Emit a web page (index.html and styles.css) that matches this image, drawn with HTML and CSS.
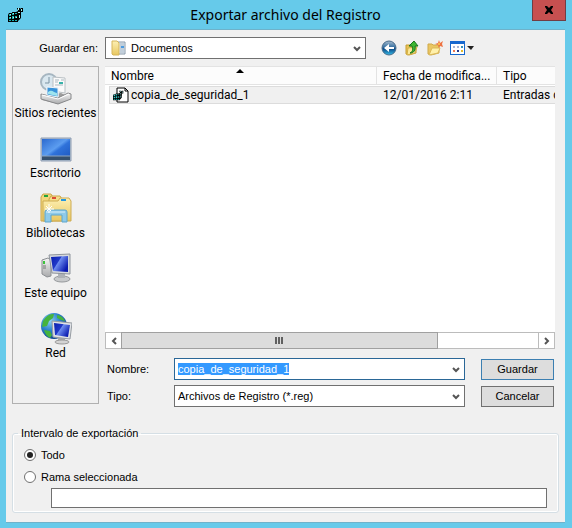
FILE: index.html
```html
<!DOCTYPE html>
<html lang="es">
<head>
<meta charset="utf-8">
<title>Exportar archivo del Registro</title>
<link rel="stylesheet" href="styles.css">
</head>
<body>
<svg class="defs" aria-hidden="true">
  <defs>
    <symbol id="reg" viewBox="0 0 16 16">
      <path d="M0 8 1 6h3V5h4l2-1V3L9 2V1h3v1l1-1h2v4h-2v6l-3 3v1H0z" fill="#000"/>
      <path d="M1 7h2v2H1zM4 6h2v2H4zM7 6h2v1H7zM1 10h2v2H1zM4 9h2v3H4zM1 13h2v1H1zM4 13h2v1H4zM7 13h2v1H7zM7 9h2v2H7z" fill="#19aeb0"/>
      <path d="M2 7h1v1H2zM5 6h1v1H5zM2 10h1v1H2zM5 10h1v1H5zM10 5h2v1h-2zM11 8h1v3h-1zM13 2h1v2h-1zM10 1h1v2h-1zM8 10h1v1H8z" fill="#a5f5f3"/>
    </symbol>
    <symbol id="chev" viewBox="0 0 8 6"><path d="M1 1 4 4 7 1" fill="none" stroke="#555" stroke-width="2"/></symbol>
    <linearGradient id="blue" x1="0" y1="0" x2="1" y2="1"><stop offset="0" stop-color="#2b69cf"/><stop offset=".45" stop-color="#5c9df0"/><stop offset=".55" stop-color="#2f72da"/><stop offset="1" stop-color="#1c55bd"/></linearGradient>
    <linearGradient id="screen" x1="0" y1="0" x2="1" y2=".6"><stop offset="0" stop-color="#0a1fae"/><stop offset=".45" stop-color="#2038c8"/><stop offset=".5" stop-color="#6d8cf0"/><stop offset="1" stop-color="#0c1cb0"/></linearGradient>
    <linearGradient id="folder" x1="0" y1="0" x2="0" y2="1"><stop offset="0" stop-color="#fdf0b4"/><stop offset="1" stop-color="#e8c760"/></linearGradient>
    <linearGradient id="metal" x1="0" y1="0" x2="0" y2="1"><stop offset="0" stop-color="#f4f4f4"/><stop offset="1" stop-color="#a9aaac"/></linearGradient>
    <radialGradient id="globe" cx=".35" cy=".3" r=".75"><stop offset="0" stop-color="#8fd2f5"/><stop offset=".5" stop-color="#2c82cc"/><stop offset="1" stop-color="#0b3f8a"/></radialGradient>
    <linearGradient id="back" x1="0" y1="0" x2="0" y2="1"><stop offset="0" stop-color="#a9bdcf"/><stop offset=".45" stop-color="#326da0"/><stop offset=".55" stop-color="#0c4784"/><stop offset="1" stop-color="#35bdea"/></linearGradient>
  </defs>
</svg>
<div class="window">
  <header class="titlebar">
    <svg class="app-icon"><use href="#reg"/></svg>
    <h1>Exportar archivo del Registro</h1>
    <button class="close" aria-label="Cerrar"><svg viewBox="0 0 10 8"><path d="M1 0h2l2 2 2-2h2v1L7 4l2 3v1H7L5 6 3 8H1V7l2-3-2-3z" fill="#000"/></svg></button>
  </header>
  <main class="client">
    <div class="lookin">
      <label for="folder-select">Guardar en:</label>
      <div class="combo with-icon">
        <svg class="lead" viewBox="0 0 16 16"><path d="M5 2h9v12H5z" fill="#e4edf5" stroke="#8898a8"/><path d="M9 4h4M9 6h4M9 8h4M9 10h4M9 12h4" stroke="#9fb0c0"/><path d="M10 6h3v2h-3z" fill="#4c9be0"/><path d="M1 1h5l2 2v12H2l-1-1z" fill="url(#folder)" stroke="#d6b65c"/></svg>
        <select id="folder-select"><option>Documentos</option></select>
        <svg class="arrow"><use href="#chev"/></svg>
      </div>
      <div class="tools">
        <button aria-label="Atrás"><svg viewBox="0 0 16 16"><circle cx="8" cy="8" r="7" fill="url(#back)" stroke="#496c8b"/><path d="M3 8l5-4v3h5v2H8v3z" fill="#fff"/></svg></button>
        <button aria-label="Subir un nivel"><svg viewBox="0 0 16 16"><path d="M2 5h4l1 2h5v6l-7 2-3-1z" fill="#e8c254" stroke="#c79d35"/><path d="M4 8l9-1-2 6-8 2z" fill="#fce99a" stroke="#d4b045"/><path d="M6 13c3-1 3-4 2-7H5l5-5 4 5h-3c1 4-1 7-5 7z" fill="#3db632" stroke="#18751c"/></svg></button>
        <button aria-label="Nueva carpeta"><svg viewBox="0 0 16 16"><path d="M1 4h4l1 1h6v8l-8 2-3-1z" fill="#eac663" stroke="#cfa94b"/><path d="M5 8h8l-2 5-9 2z" fill="#fff0aa" stroke="#dcb958"/><path d="M12 0l1 3 3-2-1 3 1 3-3-1-1 2-1-3-3-1 3-1z" fill="#ee7342"/><circle cx="12" cy="4" r="1" fill="#ffd24a"/></svg></button>
        <button class="views" aria-label="Menú Ver"><svg viewBox="0 0 24 16"><path d="M0 1h15v14H0z" fill="#1768ce"/><path d="M1 4h13v10H1z" fill="#fff"/><path d="M3 6h2v2H3zM7 6h2v2H7z" fill="#a8b5d4"/><path d="M11 6h2v2h-2z" fill="#338fbb"/><path d="M3 10h2v2H3z" fill="#f07850"/><path d="M7 10h2v2H7z" fill="#263587"/><path d="M11 10h2v2h-2z" fill="#e1b92c"/><path d="M17 6h7l-3 4z" fill="#222"/></svg></button>
      </div>
    </div>

    <div class="middle">
      <nav class="places">
        <a href="#"><svg viewBox="0 0 32 32"><path d="M2 23 21 20l10 5-13 6-16-4z" fill="#9c9c9c"/><circle cx="9" cy="9" r="8" fill="#d9e7ef" stroke="#a6b6c1" stroke-width="2"/><path d="M9 4v6H5" fill="none" stroke="#7b93a3"/><path d="M13 4l12 1v15l-12-2z" fill="#fafafa" stroke="#b9c0c4"/><path d="M15 7h4M15 9h3M15 12h8M21 7h3" stroke="#aab8c0"/><path d="M19 9h4v2h-4z" fill="#39b2a9"/><path d="M7 14l11 1v10l-11-2z" fill="#3893da" stroke="#edf3f8"/><path d="M8 19c4-3 5 0 9 1v4l-9-2z" fill="#9ee4ee"/><path d="M1 21l17 4 10-5 3 1v5l-13 5L1 26z" fill="url(#metal)" stroke="#88898b"/><path d="M2 22l16 4 11-5" fill="none" stroke="#fff"/><path d="M7 14l11 1v9l-11-2z" fill="#3893da" stroke="#edf3f8"/><path d="M8 19c4-3 5 0 9 1v3l-9-2z" fill="#9ee4ee"/></svg>Sitios recientes</a>
        <a href="#"><svg viewBox="0 0 32 32"><path d="M1 5h30v23H1z" fill="#aebdd0" stroke="#8f9eb3"/><path d="M2 6h28v21H2z" fill="url(#blue)"/><path d="M2 23h28v4H2z" fill="#36516f"/><path d="M2 23h28" stroke="#8da6c2"/></svg>Escritorio</a>
        <a href="#"><svg viewBox="0 0 32 32"><path d="M1 4l2-3h8l2 3v24H1z" fill="#f2d77c" stroke="#caa64a"/><path d="M4 2h4v2H4z" fill="#22a53c"/><path d="M9 6l2-3h9l2 3v22H9z" fill="#f5dd8a" stroke="#caa64a"/><path d="M12 4h4v2h-4z" fill="#db4b35"/><path d="M3 8h15l2-3h9l2 3v20H3z" fill="url(#folder)" stroke="#cdab52"/><path d="M21 6h5v2h-5z" fill="#2497e0"/><path d="M5 29V19q0-2 2-2h18q2 0 2 2v10h-5v-7H11v7z" fill="#8fcae8" stroke="#5ca6ce"/><path d="M6 19h19" stroke="#d6effa"/><path d="M9 11v9M5 16h9M6 13l5 5M12 13l-5 5" stroke="#fff"/></svg>Bibliotecas</a>
        <a href="#"><svg viewBox="0 0 32 32"><path d="M2 7l6-2 3 2v16l-4 1-5-3z" fill="url(#metal)" stroke="#8c8f93"/><path d="M3 8h2v3H3z" fill="#3cc43c"/><path d="M3 13h3M3 15h3" stroke="#777"/><ellipse cx="22" cy="26" rx="8" ry="3" fill="#c8cacc" stroke="#96999c"/><path d="M18 20h7v5h-7z" fill="#aeb2b6"/><path d="M9 2l21-1v20L12 20z" fill="#d6d9dd" stroke="#8e949b"/><path d="M11 4l17-1v16l-15-1z" fill="url(#screen)"/></svg>Este equipo</a>
        <a href="#"><svg viewBox="0 0 32 32"><circle cx="14" cy="13" r="13" fill="url(#globe)"/><path d="M3 8q5-8 11-7l-1 4-4 3-2 5-5 1zM17 2q6 1 8 6l-4-1-4-2zM4 17l6 1 2 4-2 3q-5-3-6-8z" fill="#46b43e"/><path d="M18 23h7v5h-7z" fill="#aaa"/><ellipse cx="22" cy="29" rx="7" ry="2" fill="#d4d4d4" stroke="#999"/><path d="M12 8l20 2-2 16-17-2z" fill="#e0e2e5" stroke="#969ba2"/><path d="M14 10l16 2-2 12-13-2z" fill="url(#screen)"/></svg>Red</a>
      </nav>
      <div class="right">
        <section class="list" aria-label="Archivos">
          <table>
            <colgroup><col class="c-name"><col class="c-date"><col></colgroup>
            <thead><tr><th>Nombre<svg class="sort" viewBox="0 0 8 4"><path d="M0 4l4-4 4 4z" fill="#000"/></svg></th><th>Fecha de modifica...</th><th>Tipo</th></tr></thead>
            <tbody><tr><td><div class="cell first"><svg viewBox="0 0 16 16"><path d="M4 1h8l3 3v11H4z" fill="#fff" stroke="#000"/><path d="M12 1v3h3" fill="none" stroke="#000"/><svg x="0" y="3" width="11" height="11"><use href="#reg"/></svg></svg>copia_de_seguridad_1</div></td><td><div class="cell">12/01/2016 2:11</div></td><td><div class="cell">Entradas de registro</div></td></tr></tbody>
          </table>
          <div class="scroll">
            <button aria-label="Desplazar a la izquierda"><svg viewBox="0 0 6 8"><path d="M5 1 2 4l3 3" fill="none" stroke="#555" stroke-width="2"/></svg></button>
            <div class="track"><div class="thumb"><i></i><i></i><i></i></div></div>
            <button aria-label="Desplazar a la derecha"><svg viewBox="0 0 6 8"><path d="M1 1l3 3-3 3" fill="none" stroke="#555" stroke-width="2"/></svg></button>
          </div>
        </section>
        <form class="fields">
          <label for="fname">Nombre:</label>
          <div class="combo active"><input id="fname" type="text" value="copia_de_seguridad_1" autofocus><svg class="arrow"><use href="#chev"/></svg></div>
          <button type="button" class="btn default">Guardar</button>
          <label for="ftype">Tipo:</label>
          <div class="combo"><select id="ftype"><option>Archivos de Registro (*.reg)</option></select><svg class="arrow"><use href="#chev"/></svg></div>
          <button type="button" class="btn">Cancelar</button>
        </form>
      </div>
    </div>

    <fieldset>
      <legend>Intervalo de exportación</legend>
      <label class="radio"><input type="radio" name="range" checked>Todo</label>
      <label class="radio"><input type="radio" name="range">Rama seleccionada</label>
      <input class="branch" type="text" aria-label="Rama seleccionada">
    </fieldset>
  </main>
</div>
<script src="script.js"></script>
</body>
</html>
```
FILE: styles.css
```css
* { box-sizing: border-box; }
body {
  margin: 0;
  font: 11px/14px "Liberation Sans", Arial, sans-serif;
  color: #000;
}
button, input, select { font: inherit; color: inherit; margin: 0; }
button { padding: 0; border: 0; background: none; }
svg { display: block; flex: none; }
.defs { position: absolute; width: 0; height: 0; }

.window {
  display: flex;
  flex-direction: column;
  min-height: 100vh;
  padding: 0 7px 5px 6px;
  background: #66caea;
}
.titlebar {
  position: relative;
  display: flex;
  align-items: center;
  justify-content: center;
  height: 29px;
}
.titlebar h1 {
  margin: 0;
  font: 14px/20px "Noto Sans", "Open Sans", sans-serif;
}
.app-icon { position: absolute; left: 2px; top: 7px; width: 16px; height: 16px; }
.close {
  position: absolute;
  right: -1px;
  top: 0;
  display: grid;
  place-items: center;
  width: 34px;
  height: 21px;
  background: #c75050;
  border: 1px solid #713d43;
  border-top: 0;
}
.close svg { width: 10px; height: 8px; }

.client {
  flex: 1;
  display: flex;
  flex-direction: column;
  padding: 7px 6px 9px;
  background: #f0f0f0;
  border-top: 1px solid #6eb2ca;
  border-bottom: 1px solid #6eb2ca;
}

.lookin { display: flex; align-items: center; padding-right: 4px; }
.lookin label { width: 93px; padding-right: 7px; text-align: right; }
.lookin .combo { flex: 1; }
.tools { display: flex; gap: 7px; width: 189px; padding-left: 15px; }
.tools svg { width: 16px; height: 16px; }
.tools .views svg { width: 24px; }

.combo {
  position: relative;
  height: 22px;
  background: #fff;
  border: 1px solid #707070;
}
.combo.active { border-color: #2a6797; }
.combo select, .combo input {
  display: block;
  width: 100%;
  height: 100%;
  padding: 0 20px 0 3px;
  border: 0;
  outline: 0;
  background: none;
  appearance: none;
}
.combo.with-icon select { padding-left: 25px; }
.lead { position: absolute; left: 5px; top: 2px; width: 16px; height: 16px; }
.arrow { position: absolute; right: 4px; top: 8px; width: 8px; height: 6px; pointer-events: none; }
::selection { color: #fff; background: #3399ff; }

.middle { flex: 1; display: flex; gap: 6px; margin-top: 7px; padding-right: 4px; }
.places {
  width: 87px;
  margin-bottom: 3px;
  padding-top: 6px;
  border: 1px solid #b0b0b0;
}
.places a {
  display: flex;
  flex-direction: column;
  align-items: center;
  height: 60px;
  font: 12px/16px Roboto, "Open Sans", sans-serif;
  color: #000;
  text-decoration: none;
  white-space: nowrap;
}
.places svg { width: 32px; height: 32px; }

.right { flex: 1; min-width: 0; display: flex; flex-direction: column; }
.list {
  flex: 1;
  display: flex;
  flex-direction: column;
  justify-content: space-between;
  overflow: hidden;
  background: #fff;
  font: 12px/16px Roboto, "Open Sans", sans-serif;
}
table { width: 100%; table-layout: fixed; border-collapse: separate; border-spacing: 0; }
.c-name { width: 272px; }
.c-date { width: 120px; }
th {
  position: relative;
  height: 19px;
  padding: 0 6px;
  overflow: hidden;
  font-weight: normal;
  text-align: left;
  white-space: nowrap;
  background: #fcfcfc;
  border: 1px solid #e3e3e3;
  border-width: 1px 1px 1px 0;
}
th:last-child { border-right: 0; }
.sort { position: absolute; left: 131px; top: 2px; width: 8px; height: 4px; }
td { padding: 1px 0 0; }
.cell {
  display: flex;
  align-items: center;
  height: 18px;
  padding-left: 6px;
  overflow: hidden;
  white-space: nowrap;
  background: #f0f0f0;
  border: 1px solid #dcdcdc;
  border-width: 1px 0;
}
.cell.first { gap: 2px; margin-left: 4px; padding-left: 3px; border-left-width: 1px; }
.cell svg { width: 16px; height: 16px; }
.cell svg svg { width: 11px; height: 11px; }

.scroll { display: flex; height: 17px; border: 1px solid #bcbcbc; }
.scroll button { display: grid; place-items: center; width: 15px; }
.scroll button svg { width: 6px; height: 8px; }
.track { flex: 1; display: flex; border-right: 1px solid #bcbcbc; }
.thumb {
  display: flex;
  align-items: center;
  justify-content: center;
  gap: 1px;
  width: 76%;
  margin: -1px 0;
  background: #dcdcdc;
  border: 1px solid #a0a0a0;
}
.thumb i { width: 2px; height: 7px; background: #606060; }

.fields {
  display: grid;
  grid-template-columns: 67px 1fr 73px;
  align-items: center;
  row-gap: 5px;
  margin-top: 9px;
  padding-right: 1px;
}
.fields label { padding-left: 2px; }
.fields .combo { margin: 0 16px 0 2px; }
.fields .btn { height: 21px; background: #ddd; border: 1px solid #707070; }
.fields .btn.default { border-color: #3c7fb1; }

fieldset {
  min-width: 0;
  margin: 19px 0 0;
  padding: 4px 11px 4px;
  border: 1px solid #d5dfe5;
  border-radius: 3px;
  box-shadow: inset 0 0 0 1px #fff;
}
legend { margin-left: -6px; padding: 0 3px; }
.radio { display: flex; align-items: center; gap: 5px; height: 22px; }
.radio input {
  appearance: none;
  display: grid;
  place-items: center;
  width: 12px;
  height: 12px;
  border: 1px solid #707070;
  border-radius: 50%;
  background: #fff;
}
.radio input:checked::before { content: ""; width: 6px; height: 6px; border-radius: 50%; background: #222; }
.branch {
  display: block;
  width: calc(100% - 27px);
  height: 20px;
  margin-left: 27px;
  padding: 0 3px;
  background: #fff;
  border: 1px solid #707070;
}
```
FILE: script.js
```js
// The proposed file name starts out selected, ready to be overwritten.
const nameField = document.getElementById("fname");
nameField.focus();
nameField.select();
```
